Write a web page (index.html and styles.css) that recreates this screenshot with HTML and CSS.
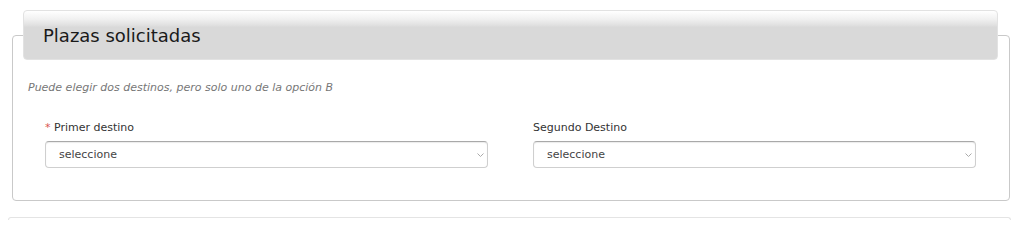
FILE: index.html
```html
<!DOCTYPE html>
<html lang="es">
<head>
<meta charset="utf-8">
<link rel="stylesheet" href="styles.css">
</head>
<body>
<fieldset class="panel">
  <legend class="panel-title"><span>Plazas solicitadas</span></legend>
  <p class="hint">Puede elegir dos destinos, pero solo uno de la opción B</p>
  <div class="fields">
    <div class="field">
      <div class="label"><span class="req">*</span> Primer destino</div>
      <div class="select"><span>seleccione</span>
        <svg class="chev" width="7" height="4" viewBox="0 0 7 4"><path d="M0.5 0.5 L3.5 3.5 L6.5 0.5" fill="none" stroke="#aaa" stroke-width="1"/></svg>
      </div>
    </div>
    <div class="field">
      <div class="label">Segundo Destino</div>
      <div class="select"><span>seleccione</span>
        <svg class="chev" width="7" height="4" viewBox="0 0 7 4"><path d="M0.5 0.5 L3.5 3.5 L6.5 0.5" fill="none" stroke="#aaa" stroke-width="1"/></svg>
      </div>
    </div>
  </div>
</fieldset>
<div class="next"></div>
</body>
</html>
```
FILE: styles.css
```css
html, body { margin: 0; padding: 0; background: #fff; }
body {
  padding: 8px 8px 0 8px;
  font-family: "DejaVu Sans", Verdana, sans-serif;
  color: #333;
  overflow: hidden;
}
.panel {
  margin: 2px 6px 0 4px;
  padding: 0 11px 32px 10px;
  border: 1px solid #c9c9c9;
  border-radius: 4px;
  min-width: 0;
}
.panel-title {
  box-sizing: border-box;
  width: 100%;
  height: 50px;
  padding: 0 0 0 19px;
  border: 1px solid #e2e2e2;
  border-radius: 4px;
  background: linear-gradient(to bottom, #ffffff 0px, #f1f1f1 8px, #dedede 15px, #d9d9d9 16px, #d9d9d9 100%);
  display: flex;
  align-items: center;
}
.panel-title span {
  font-size: 18px;
  color: #1a1a1a;
}
.hint {
  margin: 21px 0 0 5px;
  font-size: 11px;
  line-height: 13px;
  font-style: italic;
  color: #777;
}
.fields {
  display: grid;
  grid-template-columns: 1fr 1fr;
  column-gap: 45px;
  padding: 0 22px;
  margin-top: 27px;
}
.label {
  font-size: 11px;
  line-height: 13px;
  color: #333;
  margin-bottom: 7px;
}
.req { color: #d9534f; }
.select {
  box-sizing: border-box;
  height: 27px;
  border: 1px solid #cfcfcf;
  border-top-color: #a9a9a9;
  border-radius: 4px;
  box-shadow: inset 0 1px 1px rgba(0,0,0,0.08);
  display: flex;
  align-items: center;
  justify-content: space-between;
  padding: 0 3px 0 13px;
  font-size: 11px;
  color: #444;
}
.chev { display: block; margin-top: 1px; }
.next {
  margin-top: 16px;
  height: 2px;
  border: 1px solid #e4e4e4;
  border-bottom: none;
  border-radius: 4px 4px 0 0;
  margin-right: 5px;
}
```
